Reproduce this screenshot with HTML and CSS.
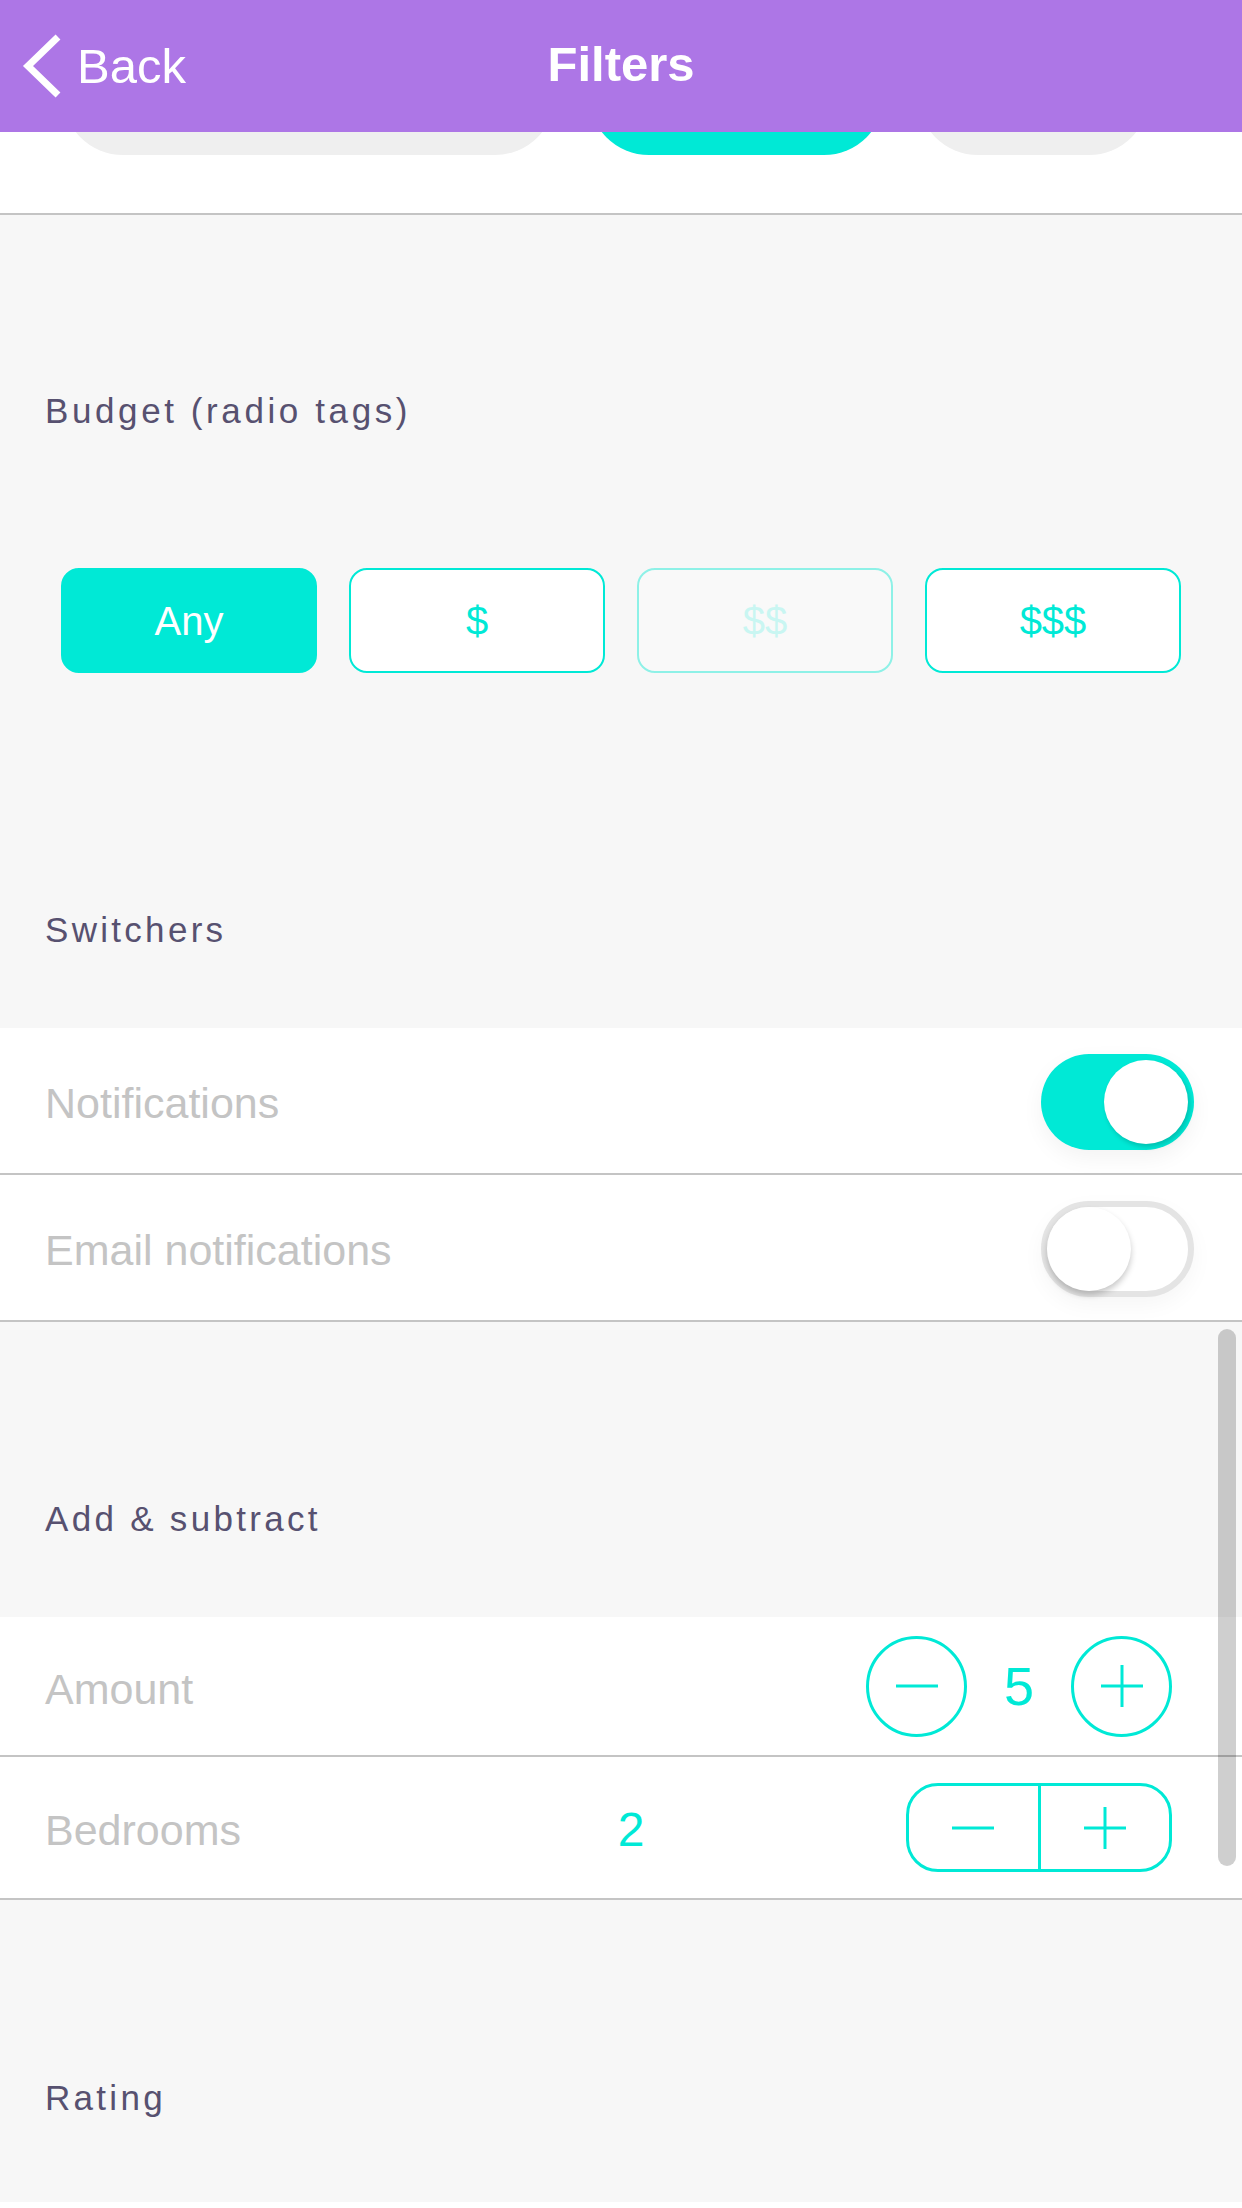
FILE: index.html
```html
<!DOCTYPE html>
<html lang="en">
<head>
<meta charset="utf-8">
<title>Filters</title>
<link rel="stylesheet" href="styles.css">
</head>
<body>
<div class="app">
  <header class="topbar">
    <div class="back">
      <svg class="chev" width="42" height="64" viewBox="0 0 42 64"><polyline points="37,3 7,32 37,61" fill="none" stroke="#fff" stroke-width="7"/></svg>
      <span>Back</span>
    </div>
    <div class="title">Filters</div>
    <div class="spacer"></div>
  </header>

  <div class="chips">
    <div class="chip-row">
      <div class="chip chip-a"></div>
      <div class="chip chip-b"></div>
      <div class="chip chip-c"></div>
    </div>
  </div>

  <section class="group group-budget">
    <div class="label label-budget">Budget (radio tags)</div>
    <div class="tags">
      <div class="tag tag-on">Any</div>
      <div class="tag">$</div>
      <div class="tag tag-off">$$</div>
      <div class="tag">$$$</div>
    </div>
    <div class="label label-switch">Switchers</div>
  </section>

  <div class="row row-sw">
    <span class="row-label">Notifications</span>
    <div class="toggle toggle-on"><div class="knob"></div></div>
  </div>
  <div class="row row-sw">
    <span class="row-label">Email notifications</span>
    <div class="toggle toggle-off"><div class="knob"></div></div>
  </div>

  <section class="group group-add">
    <div class="label">Add &amp; subtract</div>
  </section>

  <div class="row row-amount">
    <span class="row-label">Amount</span>
    <div class="stepper">
      <div class="circ"><svg width="44" height="44" viewBox="0 0 44 44"><line x1="1" y1="22" x2="43" y2="22" stroke="#00e9d6" stroke-width="3"/></svg></div>
      <div class="num num-big">5</div>
      <div class="circ"><svg width="44" height="44" viewBox="0 0 44 44"><line x1="1" y1="22" x2="43" y2="22" stroke="#00e9d6" stroke-width="3"/><line x1="22" y1="1" x2="22" y2="43" stroke="#00e9d6" stroke-width="3"/></svg></div>
    </div>
  </div>
  <div class="row row-bed">
    <span class="row-label bed-label">Bedrooms</span>
    <span class="num num-bed">2</span>
    <div class="seg">
      <div class="seg-btn"><svg width="44" height="44" viewBox="0 0 44 44"><line x1="1" y1="22" x2="43" y2="22" stroke="#00e9d6" stroke-width="3"/></svg></div>
      <div class="seg-btn seg-right"><svg width="44" height="44" viewBox="0 0 44 44"><line x1="1" y1="22" x2="43" y2="22" stroke="#00e9d6" stroke-width="3"/><line x1="22" y1="1" x2="22" y2="43" stroke="#00e9d6" stroke-width="3"/></svg></div>
    </div>
  </div>

  <section class="group group-rating">
    <div class="label">Rating</div>
  </section>

  <div class="scrollbar"></div>
</div>
</body>
</html>
```

FILE: styles.css
```css
* { box-sizing: border-box; }
html, body { margin: 0; padding: 0; }
body {
  background: #ffffff;
  font-family: "Liberation Sans", Arial, sans-serif;
  width: 1242px;
  height: 2208px;
  overflow: hidden;
}
.app { position: relative; width: 1242px; }

.topbar {
  height: 132px;
  background: #ad76e6;
  display: grid;
  grid-template-columns: 1fr auto 1fr;
  align-items: center;
  color: #fff;
  position: relative;
  z-index: 2;
}
.back {
  display: flex;
  align-items: center;
  padding-left: 21px;
  font-size: 49px;
  gap: 14px;
}
.chev { display: block; }
.title {
  font-size: 49px;
  font-weight: bold;
  margin-top: -4px;
}

.chips {
  height: 83px;
  background: #fff;
  border-bottom: 2px solid #c4c4c4;
  overflow: hidden;
}
.chip-row {
  display: flex;
  gap: 34px;
  padding-left: 63px;
  margin-top: -97px;
}
.chip { height: 120px; border-radius: 60px; background: #efefef; flex: none; }
.chip-a { width: 492px; }
.chip-b { width: 295px; background: #00e9d6; }
.chip-c { width: 231px; }

.group { background: #f7f7f7; }
.label {
  font-size: 35px;
  line-height: 40px;
  letter-spacing: 3.3px;
  color: #575170;
  padding-left: 45px;
}
.label-budget { letter-spacing: 3.6px; }
.group-budget { padding-top: 176px; padding-bottom: 78px; }
.tags {
  display: grid;
  grid-template-columns: repeat(4, 1fr);
  gap: 32px;
  margin: 137px 61px 0 61px;
}
.tag {
  height: 105px;
  border: 2px solid #00e9d6;
  border-radius: 18px;
  background: #fff;
  color: #00e9d6;
  font-size: 40px;
  display: flex;
  align-items: center;
  justify-content: center;
  padding-top: 2px;
}
.tag-on { background: #00e9d6; color: #fff; }
.tag-off { background: #f9f9f9; border-color: #8ef1e7; color: #c9f6f2; }
.label-switch { margin-top: 237px; }

.row {
  background: #fff;
  border-bottom: 2px solid #c4c4c4;
  display: flex;
  align-items: center;
  padding-left: 45px;
}
.row-label { font-size: 43px; color: #c4c4c4; padding-top: 6px; }
.row-sw { height: 147px; justify-content: space-between; padding-right: 48px; }

.toggle {
  width: 153px;
  height: 96px;
  border-radius: 48px;
  display: flex;
  align-items: center;
  padding: 0 6px;
  margin-top: 3px;
}
.knob {
  width: 84px;
  height: 84px;
  border-radius: 50%;
  background: #fff;
}
.toggle-on {
  background: #00e9d6;
  justify-content: flex-end;
  box-shadow: 0 8px 22px rgba(0,0,0,0.05);
}
.toggle-on .knob { box-shadow: 2px 3px 5px rgba(0,0,0,0.18); }
.toggle-off {
  background: #fff;
  border: 6px solid #e4e4e4;
  padding: 0;
  box-shadow: 0 8px 22px rgba(0,0,0,0.04);
}
.toggle-off .knob { box-shadow: 0 4px 6px rgba(0,0,0,0.22); }

.group-add { padding-top: 177px; padding-bottom: 78px; }

.row-amount { height: 140px; justify-content: space-between; padding-right: 70px; }
.stepper { display: flex; align-items: center; }
.circ {
  width: 101px;
  height: 101px;
  border: 3px solid #00e9d6;
  border-radius: 50%;
  display: flex;
  align-items: center;
  justify-content: center;
}
.circ svg, .seg-btn svg { display: block; }
.num { color: #00e9d6; text-align: center; }
.num-big { width: 104px; font-size: 54px; }

.row-bed { height: 143px; padding-right: 70px; }
.bed-label { width: 560px; }
.num-bed { width: 52px; font-size: 48px; padding-top: 4px; }
.seg {
  margin-left: auto;
  width: 266px;
  height: 89px;
  border: 3px solid #00e9d6;
  border-radius: 32px;
  display: flex;
}
.seg-btn {
  flex: 1;
  display: flex;
  align-items: center;
  justify-content: center;
}
.seg-right { border-left: 3px solid #00e9d6; }

.group-rating { padding-top: 178px; padding-bottom: 84px; }

.scrollbar {
  position: absolute;
  left: 1218px;
  top: 1329px;
  width: 18px;
  height: 537px;
  border-radius: 9px;
  background: rgba(0,0,0,0.19);
}
```
